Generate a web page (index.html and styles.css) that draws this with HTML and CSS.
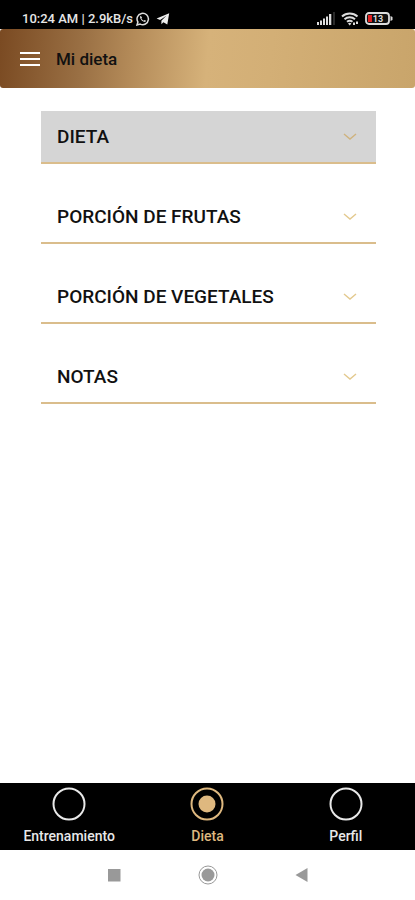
FILE: index.html
```
<!DOCTYPE html>
<html lang="es">
<head>
<meta charset="UTF-8">
<meta name="viewport" content="width=device-width, initial-scale=1.0">
<title>Mi dieta</title>
<link rel="stylesheet" href="styles.css">
</head>
<body>
<div class="status-bar">
  <span class="status-text">10:24 AM | 2.9kB/s</span>
  <svg class="whatsapp" width="14" height="14" viewBox="0 0 14 14">
    <path d="M1 13l.9-3A5.700 5.700 0 1 1 4.200 12.100z" fill="none" stroke="#ddd" stroke-width="1.500"/>
    <path d="M4.700 3.800c-.8.500-.9 1.600-.2 2.900.8 1.500 2 2.600 3.500 3.100 1 .3 1.900-.1 2.100-1l-1.600-.9-.8.800C6.700 8.200 5.900 7.400 5.400 6.300l.7-.8z" fill="#ddd"/>
  </svg>
  <svg class="telegram" width="14" height="14" viewBox="0 0 14 14">
    <path d="M13.200 1.200L.6 6.500l3.500 1.400 6.200-4.200-4.900 5v3.500l2-2 3.900 2.200z" fill="#eee"/>
  </svg>
  <div class="status-icons">
    <svg width="18" height="13" viewBox="0 0 18 13">
      <path d="M0 10h2v3H0zM3 8.500h2V13H3zM6 6.500h2V13H6zM9 4.500h2V13H9zM12 2h2.300v11H12z" fill="#ddd"/>
      <path d="M16.500 0h1v13h-1z" fill="#555"/>
    </svg>
    <svg width="18" height="14" viewBox="0 0 18 14">
      <path d="M1 4.600a11.500 11.500 0 0 1 15.500 0M3.500 7.300a8 8 0 0 1 10.500 0M6 9.800a4.500 4.500 0 0 1 5.500 0" fill="none" stroke="#ddd" stroke-width="2"/>
      <path d="M7 11.500a2.500 2.500 0 0 1 3.400 0L8.700 13.500zM12 10.500h2V13h-2zM15 9.500h2V12h-2z" fill="#ddd"/>
    </svg>
    <svg width="28" height="13" viewBox="0 0 28 13">
      <rect x="1" y="1" width="23" height="11" rx="3" fill="#111" stroke="#ddd" stroke-width="1.800"/>
      <path d="M25.500 4l2 1v3l-2 1z" fill="#ddd"/>
      <path d="M3 3h4v7H3z" fill="#e02020"/>
      <text x="13" y="10" class="battery-level">13</text>
    </svg>
  </div>
</div>

<header class="app-bar">
  <button class="menu-button" aria-label="Menú">
    <svg width="20" height="14" viewBox="0 0 20 14">
      <path d="M0 1h20M0 7h20M0 13h20" stroke="#fff" stroke-width="2"/>
    </svg>
  </button>
  <h1 class="title">Mi dieta</h1>
</header>

<main class="sections">
  <button class="section active">
    <span>DIETA</span>
    <svg class="chevron" width="14" height="8" viewBox="0 0 14 8"><path d="M1 1l6 5 6-5"/></svg>
  </button>
  <button class="section">
    <span>PORCIÓN DE FRUTAS</span>
    <svg class="chevron" width="14" height="8" viewBox="0 0 14 8"><path d="M1 1l6 5 6-5"/></svg>
  </button>
  <button class="section">
    <span>PORCIÓN DE VEGETALES</span>
    <svg class="chevron" width="14" height="8" viewBox="0 0 14 8"><path d="M1 1l6 5 6-5"/></svg>
  </button>
  <button class="section">
    <span>NOTAS</span>
    <svg class="chevron" width="14" height="8" viewBox="0 0 14 8"><path d="M1 1l6 5 6-5"/></svg>
  </button>
</main>

<nav class="tabs">
  <a class="tab" href="#entrenamiento">
    <svg width="34" height="34" viewBox="0 0 34 34"><circle cx="17" cy="17" r="15.500"/></svg>
    <span>Entrenamiento</span>
  </a>
  <a class="tab selected" href="#dieta">
    <svg width="34" height="34" viewBox="0 0 34 34"><circle cx="17" cy="17" r="15.500"/><circle class="dot" cx="17" cy="17" r="8.500"/></svg>
    <span>Dieta</span>
  </a>
  <a class="tab" href="#perfil">
    <svg width="34" height="34" viewBox="0 0 34 34"><circle cx="17" cy="17" r="15.500"/></svg>
    <span>Perfil</span>
  </a>
</nav>

<div class="system-nav">
  <button aria-label="Recientes">
    <svg width="20" height="20" viewBox="0 0 20 20"><path d="M4 4h12.500v12.500H4z" fill="#999"/></svg>
  </button>
  <button aria-label="Inicio">
    <svg width="20" height="20" viewBox="0 0 20 20">
      <circle cx="10" cy="10" r="9" fill="none" stroke="#999"/>
      <circle cx="10" cy="10" r="6.500" fill="#999"/>
    </svg>
  </button>
  <button aria-label="Atrás">
    <svg width="20" height="20" viewBox="0 0 20 20"><path d="M15.500 3v14L3.500 10z" fill="#999"/></svg>
  </button>
</div>
</body>
</html>
```
FILE: styles.css
```
* {
  box-sizing: border-box;
}
body {
  margin: 0;
  min-height: 100vh;
  display: flex;
  flex-direction: column;
  background-color: #fff;
  color: #111;
  font-family: Roboto, sans-serif;
}
svg {
  display: block;
}
button {
  margin: 0;
  padding: 0;
  border: none;
  background: none;
  font: inherit;
  color: inherit;
  cursor: pointer;
}
.status-bar {
  display: flex;
  align-items: center;
  height: 29px;
  padding: 8px 22px 0;
  background-color: #000;
  color: #e6e6e6;
}
.status-text {
  font-size: 13px;
  font-weight: 500;
}
.whatsapp {
  margin-left: 3px;
}
.telegram {
  margin-left: 6px;
}
.status-icons {
  display: flex;
  align-items: center;
  gap: 6px;
  margin-left: auto;
}
.battery-level {
  fill: #ddd;
  font-size: 9px;
  font-weight: 700;
  text-anchor: middle;
}
.app-bar {
  display: flex;
  align-items: center;
  gap: 16px;
  height: 59px;
  padding: 0 20px;
  border-radius: 3px;
  background: linear-gradient(95deg, #7a4a22 0%, #9a7044 20%, #b48b59 32%, #d6b27a 50%, #d3af76 65%, #c9a56b 100%);
}
.title {
  margin: 0;
  font-size: 17px;
  font-weight: 500;
}
.sections {
  flex: 1;
  display: flex;
  flex-direction: column;
  gap: 27px;
  padding: 23px 39px 27px 41px;
}
.section {
  display: flex;
  align-items: center;
  justify-content: space-between;
  height: 53px;
  padding: 0 19px 0 16px;
  border-bottom: 2px solid #dabd8c;
  font-size: 19px;
  font-weight: 500;
}
.section.active {
  background-color: #d5d5d5;
}
.chevron path {
  fill: none;
  stroke: #e3c98e;
  stroke-width: 1.400;
}
.active .chevron path {
  stroke: #cfb37e;
}
.tabs {
  display: grid;
  grid-template-columns: repeat(3, 1fr);
  height: 67px;
  background-color: #000;
}
.tab {
  display: flex;
  flex-direction: column;
  align-items: center;
  gap: 7px;
  padding-top: 4px;
  color: #e8e8e8;
  font-size: 14px;
  font-weight: 500;
  line-height: 16px;
  text-decoration: none;
}
.tab circle {
  fill: none;
  stroke: currentColor;
  stroke-width: 2;
}
.tab .dot {
  fill: currentColor;
  stroke: none;
}
.tab.selected {
  color: #deb87f;
}
.system-nav {
  display: flex;
  justify-content: center;
  align-items: center;
  gap: 74px;
  height: 50px;
}
```
